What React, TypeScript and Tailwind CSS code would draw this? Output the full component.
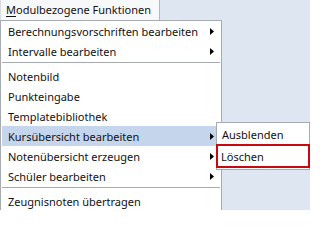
import type { ReactNode } from "react";

type Item = { label: string; sub?: boolean; active?: boolean } | "sep";

const items: Item[] = [
  { label: "Berechnungsvorschriften bearbeiten", sub: true },
  { label: "Intervalle bearbeiten", sub: true },
  "sep",
  { label: "Notenbild" },
  { label: "Punkteingabe" },
  { label: "Templatebibliothek" },
  { label: "Kursübersicht bearbeiten", sub: true, active: true },
  { label: "Notenübersicht erzeugen", sub: true },
  { label: "Schüler bearbeiten", sub: true },
  "sep",
  { label: "Zeugnisnoten übertragen" },
];

function Arrow() {
  return (
    <svg width="4" height="7" viewBox="0 0 4 7" className="shrink-0">
      <path d="M0 0 L4 3.5 L0 7 Z" fill="#000" />
    </svg>
  );
}

function Row({ children, active }: { children: ReactNode; active?: boolean }) {
  return (
    <div
      className={`h-[20px] flex items-center pl-[6px] pr-[6px] pt-px ${active ? "bg-[#c4d5ec]" : ""}`}
    >
      {children}
    </div>
  );
}

export default function App() {
  return (
    <div
      className="relative w-[310px] h-[210px] overflow-hidden bg-[#dee7f1] text-[11px] text-[#111]"
      style={{ fontFamily: '"Noto Sans", "Open Sans", sans-serif' }}
    >
      <div className="w-[160px] h-[20px] bg-[#f7f8fa] border-r border-[#b4b8bd] border-l border-l-[#d8dce0] flex items-center pl-[5px] pb-px leading-none whitespace-nowrap">
        <span>
          <span className="underline underline-offset-2">M</span>odulbezogene Funktionen
        </span>
      </div>

      <div className="w-[222px] bg-white border border-[#a7abb0] px-px">
        {items.map((it, i) =>
          it === "sep" ? (
            <div key={i} className="h-[5px] pt-px">
              <div className="w-full h-px bg-[#a7abb0]" />
            </div>
          ) : (
            <Row key={i} active={it.active}>
              <span className="flex-1 whitespace-nowrap leading-none">{it.label}</span>
              {it.sub && <Arrow />}
            </Row>
          ),
        )}
      </div>

      <div className="absolute left-[216px] top-[122px] w-[94px] bg-white border border-[#a7abb0] py-px">
        <div className="h-[20px] flex items-center pl-[5px] pt-px leading-none">Ausblenden</div>
        <div className="h-[24px] flex items-center pl-[3px] pt-px leading-none border-2 border-[#c8080e] -mx-px">
          Löschen
        </div>
      </div>
    </div>
  );
}
